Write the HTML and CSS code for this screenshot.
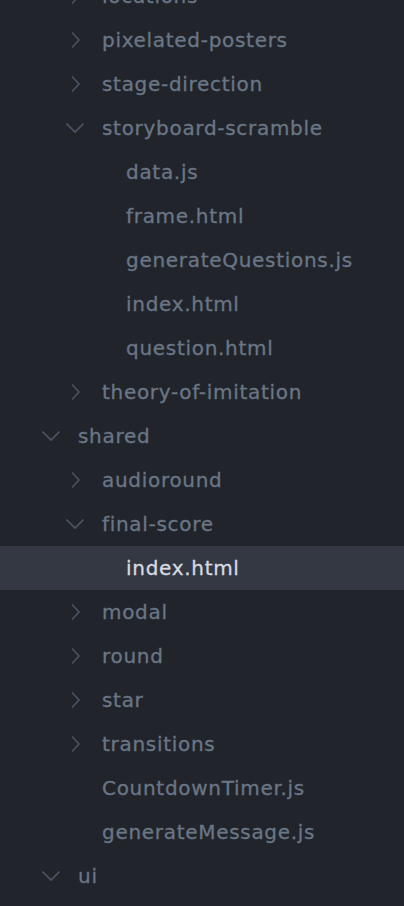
FILE: index.html
```html
<!DOCTYPE html>
<html>
<head>
<meta charset="utf-8">
<link rel="stylesheet" href="styles.css">
</head>
<body>
<div class="tree">
  <ul class="group lvl1">
    <li class="row"><span class="chev right"><svg viewBox="0 0 18 18"><path d="M6 1.5 L13 9 L6 16.5"/></svg></span><span class="name">locations</span></li>
    <li class="row"><span class="chev right"><svg viewBox="0 0 18 18"><path d="M6 1.5 L13 9 L6 16.5"/></svg></span><span class="name">pixelated-posters</span></li>
    <li class="row"><span class="chev right"><svg viewBox="0 0 18 18"><path d="M6 1.5 L13 9 L6 16.5"/></svg></span><span class="name">stage-direction</span></li>
    <li class="row"><span class="chev down"><svg viewBox="0 0 18 18"><path d="M0.5 4.5 L9 13 L17.5 4.5"/></svg></span><span class="name">storyboard-scramble</span></li>
    <li>
      <ul class="group files">
        <li class="row file"><span class="name">data.js</span></li>
        <li class="row file"><span class="name">frame.html</span></li>
        <li class="row file"><span class="name">generateQuestions.js</span></li>
        <li class="row file"><span class="name">index.html</span></li>
        <li class="row file"><span class="name">question.html</span></li>
      </ul>
    </li>
    <li class="row"><span class="chev right"><svg viewBox="0 0 18 18"><path d="M6 1.5 L13 9 L6 16.5"/></svg></span><span class="name">theory-of-imitation</span></li>
  </ul>
  <ul class="group lvl0">
    <li class="row"><span class="chev down"><svg viewBox="0 0 18 18"><path d="M0.5 4.5 L9 13 L17.5 4.5"/></svg></span><span class="name">shared</span></li>
    <li>
      <ul class="group sub">
        <li class="row"><span class="chev right"><svg viewBox="0 0 18 18"><path d="M6 1.5 L13 9 L6 16.5"/></svg></span><span class="name">audioround</span></li>
        <li class="row"><span class="chev down"><svg viewBox="0 0 18 18"><path d="M0.5 4.5 L9 13 L17.5 4.5"/></svg></span><span class="name">final-score</span></li>
        <li>
          <ul class="group files">
            <li class="row file selected"><span class="name">index.html</span></li>
          </ul>
        </li>
        <li class="row"><span class="chev right"><svg viewBox="0 0 18 18"><path d="M6 1.5 L13 9 L6 16.5"/></svg></span><span class="name">modal</span></li>
        <li class="row"><span class="chev right"><svg viewBox="0 0 18 18"><path d="M6 1.5 L13 9 L6 16.5"/></svg></span><span class="name">round</span></li>
        <li class="row"><span class="chev right"><svg viewBox="0 0 18 18"><path d="M6 1.5 L13 9 L6 16.5"/></svg></span><span class="name">star</span></li>
        <li class="row"><span class="chev right"><svg viewBox="0 0 18 18"><path d="M6 1.5 L13 9 L6 16.5"/></svg></span><span class="name">transitions</span></li>
        <li class="row file"><span class="name">CountdownTimer.js</span></li>
        <li class="row file"><span class="name">generateMessage.js</span></li>
      </ul>
    </li>
    <li class="row"><span class="chev down"><svg viewBox="0 0 18 18"><path d="M0.5 4.5 L9 13 L17.5 4.5"/></svg></span><span class="name">ui</span></li>
  </ul>
</div>
</body>
</html>
```
FILE: styles.css
```css
html, body {
  margin: 0;
  padding: 0;
  background: #21252b;
  height: 100%;
  overflow: hidden;
}
.tree {
  margin-top: -26px;
  font-family: "DejaVu Sans", "Open Sans", sans-serif;
  font-size: 20px;
  letter-spacing: 0.7px;
  color: #6a7686;
  -webkit-text-stroke: 0.3px currentColor;
}
ul {
  list-style: none;
  margin: 0;
  padding: 0;
}
.row {
  display: flex;
  align-items: center;
  height: 44px;
  --indent: 42px;
  padding-left: var(--indent);
}
.lvl1 > .row { --indent: 66px; }
.lvl1 .files > .row { --indent: 126px; }
.lvl0 > .row { --indent: 42px; }
.sub > .row { --indent: 66px; }
.sub > .row.file { --indent: 102px; }
.sub .files > .row { --indent: 126px; }
.chev {
  width: 18px;
  height: 18px;
  margin-right: 18px;
  display: flex;
}
.chev svg {
  width: 18px;
  height: 18px;
  fill: none;
  stroke: #4b5563;
  stroke-width: 1.6;
}
.name {
  white-space: nowrap;
  line-height: 44px;
}
.selected {
  background: #333842;
  color: #d7dae0;
}
```
